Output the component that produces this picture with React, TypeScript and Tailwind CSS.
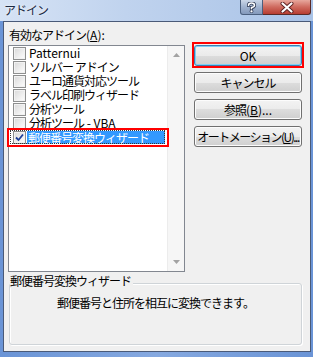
import React from 'react';

const items: React.ReactNode[] = [
  <span className="tracking-normal">Patternui</span>,
  'ソルバー アドイン',
  'ユーロ通貨対応ツール',
  'ラベル印刷ウィザード',
  '分析ツール',
  <>
    分析ツール<span className="tracking-normal whitespace-pre"> - VBA</span>
  </>,
];

const CheckBox: React.FC<{ checked?: boolean }> = ({ checked }) => (
  <div className="w-[13px] h-[13px] shrink-0 border border-[#8e8f8f] bg-[linear-gradient(135deg,#d9d9d9,#f7f7f7)] flex items-center justify-center">
    <div className="w-[11px] h-[11px] border border-[#f2f2f2] bg-[linear-gradient(135deg,#dcdcdc,#fbfbfb)] flex items-center justify-center">
      {checked && (
        <svg width="9" height="9" viewBox="0 0 9 9">
          <path d="M1 4.5 L3.5 7 L8 1.5" stroke="#1f3f99" strokeWidth="1.8" fill="none" />
        </svg>
      )}
    </div>
  </div>
);

const Button: React.FC<{ children: React.ReactNode; primary?: boolean; className?: string }> = ({ children, primary, className }) => (
  <div
    className={
      'relative h-[21px] w-full rounded-[3px] border flex items-center justify-center bg-[linear-gradient(#f3f3f3_0%,#ebebeb_50%,#dddddd_50%,#cfcfcf_100%)] ' +
      (primary ? 'border-[#3c7fb1] shadow-[inset_0_0_0_1px_#7fd0f5] ' : 'border-[#707070] shadow-[inset_0_0_0_1px_#fcfcfc] ') +
      (className || '')
    }
  >
    {children}
  </div>
);

export default function App() {
  return (
    <div className="w-[313px] h-[357px] flex flex-col bg-[linear-gradient(90deg,#6a94d6,#86a9e0_50%,#6a94d6)] font-['Noto_Sans_CJK_JP',sans-serif] text-[12px] leading-[14px] tracking-[-1px] text-black">
      {/* title bar */}
      <div className="h-[21px] flex justify-between items-start bg-[linear-gradient(90deg,#d6e3f5,#c0d3ee_40%,#a9c3e7)]">
        <div className="pl-[4px] pt-[3px] text-[#1b2a44] [text-shadow:0_0_3px_#ffffff]">アドイン</div>
        <div className="flex mr-[2px]">
          <div className="w-[23px] h-[15px] rounded-bl-[3px] border border-t-0 border-[#4b5f7e] bg-[linear-gradient(#cbd7e8,#9fb2cf_50%,#8499bb)] flex items-center justify-center">
            <svg width="9" height="11" viewBox="0 0 9 11">
              <path d="M1.5 3.5 Q1.5 1 4.5 1 Q7.5 1 7.5 3.3 Q7.5 5 4.5 5.6 L4.5 7" stroke="#2a3550" strokeWidth="3.2" fill="none" strokeLinecap="round" />
              <path d="M1.5 3.5 Q1.5 1 4.5 1 Q7.5 1 7.5 3.3 Q7.5 5 4.5 5.6 L4.5 7" stroke="#ffffff" strokeWidth="1.6" fill="none" strokeLinecap="round" />
              <circle cx="4.5" cy="9.3" r="1.5" fill="#ffffff" stroke="#2a3550" strokeWidth="0.8" />
            </svg>
          </div>
          <div className="w-[48px] h-[15px] rounded-br-[3px] border border-t-0 border-l-0 border-[#5a2a26] bg-[linear-gradient(#e7a89d,#cf6a5e_50%,#b73d31)] flex items-center justify-center">
            <svg width="14" height="11" viewBox="0 0 14 11">
              <path d="M2.5 1.5 L11.5 9.5 M11.5 1.5 L2.5 9.5" stroke="#5a2020" strokeWidth="4" strokeLinecap="round" />
              <path d="M2.5 1.5 L11.5 9.5 M11.5 1.5 L2.5 9.5" stroke="#ffffff" strokeWidth="2.2" strokeLinecap="round" />
            </svg>
          </div>
        </div>
      </div>

      {/* body */}
      <div className="flex-1 flex pl-[3px] pr-[2px] pb-[5px]">
        <div className="flex-1 border border-[#4a5a78] bg-[#f0f0f0] pl-[4px] pt-[6px] flex flex-col">
          <div className="flex">
            <div className="w-[177px] flex flex-col">
              <div className="ml-[1px] h-[14px] mb-[3px]">
                有効なアドイン<span className="tracking-normal">(<span className="underline">A</span>):</span>
              </div>
              <div className="h-[227px] border border-[#828790] bg-white flex">
                <div className="flex-1 flex flex-col">
                  {items.map((t, i) => (
                    <div key={i} className="h-[14px] flex items-center pl-[4px] whitespace-nowrap">
                      <CheckBox />
                      <span className="ml-[2px] pl-[1px]">{t}</span>
                    </div>
                  ))}
                  <div className="relative h-[14px] flex items-center pl-[4px] whitespace-nowrap">
                    <CheckBox checked />
                    <span className="ml-[1px] pl-[1px] w-[138px] h-[13px] bg-[#3399ff] text-white">郵便番号変換ウィザード</span>
                    <div className="absolute left-[1px] right-[2px] top-0 bottom-0 border border-dotted border-[#333]" />
                    <div className="absolute -left-[2px] -right-[2px] -top-[2px] -bottom-[3px] border-2 border-[#ff0000]" />
                  </div>
                </div>
                <div className="w-[17px] bg-[#f6f6f6] border-l border-[#ececec] flex flex-col justify-between items-center py-[7px]">
                  <svg width="7" height="4" viewBox="0 0 7 4">
                    <path d="M0 4 L3.5 0 L7 4 Z" fill="#a3a3a3" />
                  </svg>
                  <svg width="7" height="4" viewBox="0 0 7 4">
                    <path d="M0 0 L3.5 4 L7 0 Z" fill="#a3a3a3" />
                  </svg>
                </div>
              </div>
            </div>

            <div className="ml-[9px] w-[108px] pt-[17px] flex flex-col gap-[6px]">
              <div className="relative">
                <Button primary className="tracking-normal">OK</Button>
                <div className="absolute -left-[2px] -right-[2px] -top-[3px] -bottom-[2px] border-2 border-[#ff0000]" />
              </div>
              <Button>キャンセル</Button>
              <Button>
                参照<span className="tracking-normal">(<span className="underline">B</span>)...</span>
              </Button>
              <Button className="tracking-[-1.5px] whitespace-nowrap">
                オートメーション(<span className="underline">U</span>)...
              </Button>
            </div>
          </div>

          <div className="relative ml-[1px] mt-[11px] w-[293px] h-[62px] rounded-[3px] border border-[#cfd4d8] shadow-[inset_1px_1px_0_#ffffff,1px_1px_0_#ffffff]">
            <span className="absolute left-0 -top-[10px] pr-[2px] bg-[#f0f0f0]">郵便番号変換ウィザード</span>
            <div className="pt-[12px] text-center">郵便番号と住所を相互に変換できます。</div>
          </div>
        </div>
      </div>
    </div>
  );
}
